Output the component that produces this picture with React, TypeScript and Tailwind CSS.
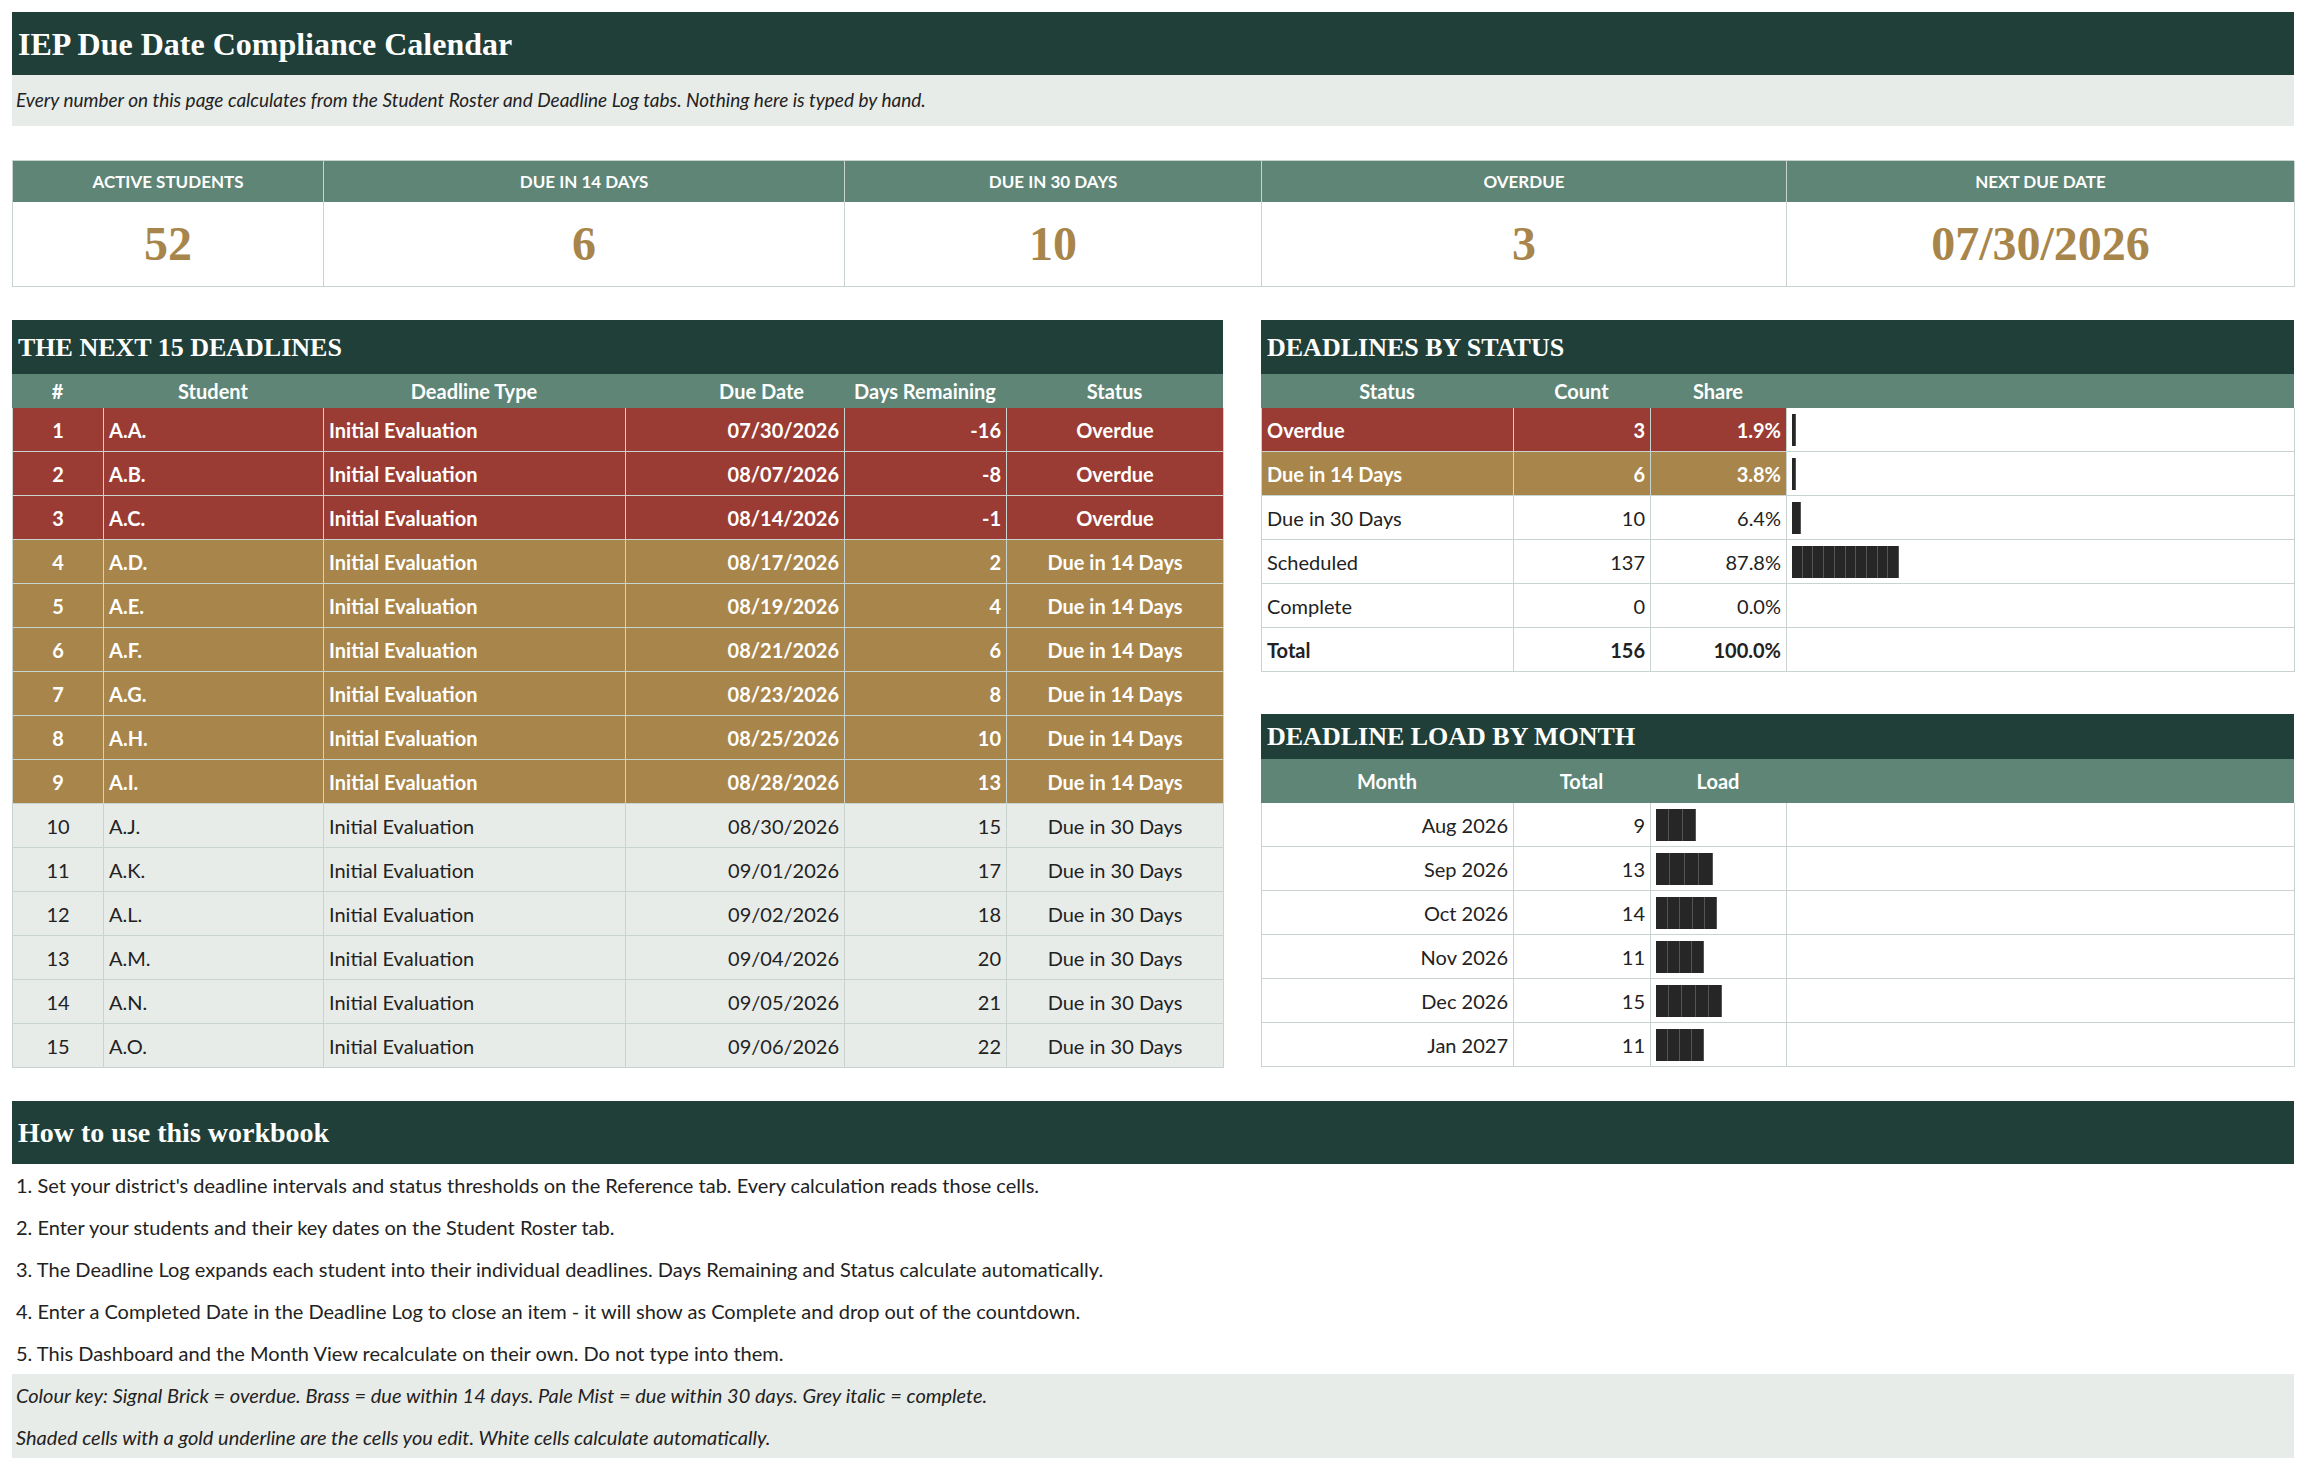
import React from "react";

const SANS = { fontFamily: "Lato, 'Liberation Sans', sans-serif" };
const SERIF = { fontFamily: "'Liberation Serif', 'DejaVu Serif', serif" };

const rows = [
  ["A.A.", "07/30/2026", "-16", "Overdue"],
  ["A.B.", "08/07/2026", "-8", "Overdue"],
  ["A.C.", "08/14/2026", "-1", "Overdue"],
  ["A.D.", "08/17/2026", "2", "Due in 14 Days"],
  ["A.E.", "08/19/2026", "4", "Due in 14 Days"],
  ["A.F.", "08/21/2026", "6", "Due in 14 Days"],
  ["A.G.", "08/23/2026", "8", "Due in 14 Days"],
  ["A.H.", "08/25/2026", "10", "Due in 14 Days"],
  ["A.I.", "08/28/2026", "13", "Due in 14 Days"],
  ["A.J.", "08/30/2026", "15", "Due in 30 Days"],
  ["A.K.", "09/01/2026", "17", "Due in 30 Days"],
  ["A.L.", "09/02/2026", "18", "Due in 30 Days"],
  ["A.M.", "09/04/2026", "20", "Due in 30 Days"],
  ["A.N.", "09/05/2026", "21", "Due in 30 Days"],
  ["A.O.", "09/06/2026", "22", "Due in 30 Days"],
];

function Bar({ w, segs }: { w: number; segs: number }) {
  return (
    <div className="flex h-[32px] bg-[#262626]" style={{ width: w }}>
      {Array.from({ length: segs }).map((_, i) => (
        <div key={i} className="h-full flex-1 border-r border-[#555]" />
      ))}
    </div>
  );
}

function SectionTitle({ children }: { children: React.ReactNode }) {
  return (
    <div className="bg-[#1f3f38] text-white font-bold text-[26px] h-[54px] flex items-center px-[6px]" style={SERIF}>
      {children}
    </div>
  );
}

export default function App() {
  const kpis = [
    ["ACTIVE STUDENTS", "52"],
    ["DUE IN 14 DAYS", "6"],
    ["DUE IN 30 DAYS", "10"],
    ["OVERDUE", "3"],
    ["NEXT DUE DATE", "07/30/2026"],
  ];
  const status = [
    ["Overdue", "3", "1.9%", 4, 1, "brick"],
    ["Due in 14 Days", "6", "3.8%", 4, 1, "brass"],
    ["Due in 30 Days", "10", "6.4%", 9, 1, ""],
    ["Scheduled", "137", "87.8%", 107, 10, ""],
    ["Complete", "0", "0.0%", 0, 0, ""],
  ] as const;
  const months = [
    ["Aug 2026", "9", 40, 3],
    ["Sep 2026", "13", 57, 4],
    ["Oct 2026", "14", 61, 5],
    ["Nov 2026", "11", 48, 4],
    ["Dec 2026", "15", 66, 5],
    ["Jan 2027", "11", 48, 4],
  ] as const;
  const lcols = "grid-cols-[91px_220px_302px_219px_162px_217px]";
  const rcols = "grid-cols-[252px_137px_136px_508px]";
  const cell = "border-r border-b border-[#c9d3cf] flex items-center px-[5px] h-[44px]";

  return (
    <div className="w-[2306px] h-[1467px] bg-white text-[#222] text-[20px] pt-[12px] px-[12px]" style={SANS}>
      <div className="bg-[#1f3f38] text-white font-bold text-[32px] h-[63px] flex items-center px-[6px]" style={SERIF}>
        IEP Due Date Compliance Calendar
      </div>
      <div className="bg-[#e8ece9] h-[51px] flex items-center px-[4px] italic text-[19px]">
        Every number on this page calculates from the Student Roster and Deadline Log tabs. Nothing here is typed by hand.
      </div>

      <div className="mt-[34px] grid grid-cols-[311px_521px_417px_525px_508px] border-l border-t border-[#c9d3cf]">
        {kpis.map(([h, v]) => (
          <div key={h} className="border-r border-b border-[#c9d3cf]">
            <div className="bg-[#5e8576] text-white font-bold text-[17px] h-[41px] flex items-center justify-center">{h}</div>
            <div className="h-[84px] flex items-center justify-center text-[#a8854a] font-bold text-[48px]" style={SERIF}>{v}</div>
          </div>
        ))}
      </div>

      <div className="mt-[33px] flex gap-[38px]">
        <div className="w-[1211px]">
          <SectionTitle>THE NEXT 15 DEADLINES</SectionTitle>
          <div className={`grid ${lcols} bg-[#5e8576] text-white font-bold h-[34px] items-center text-center`}>
            <div>#</div><div>Student</div><div>Deadline Type</div><div className="text-right pr-[40px]">Due Date</div><div>Days Remaining</div><div>Status</div>
          </div>
          {rows.map((r, i) => {
            const bg = r[3] === "Overdue" ? "bg-[#9a3c34] text-white font-bold" : r[3] === "Due in 14 Days" ? "bg-[#a8854a] text-white font-bold" : "bg-[#e8ece9]";
            return (
              <div key={i} className={`grid ${lcols} ${bg} border-l border-[#c9d3cf]`}>
                <div className={`${cell} justify-center`}>{i + 1}</div>
                <div className={cell}>{r[0]}</div>
                <div className={cell}>Initial Evaluation</div>
                <div className={`${cell} justify-end`}>{r[1]}</div>
                <div className={`${cell} justify-end`}>{r[2]}</div>
                <div className={`${cell} justify-center`}>{r[3]}</div>
              </div>
            );
          })}
        </div>

        <div className="w-[1033px]">
          <SectionTitle>DEADLINES BY STATUS</SectionTitle>
          <div className={`grid ${rcols} bg-[#5e8576] text-white font-bold h-[34px] items-center text-center`}>
            <div>Status</div><div>Count</div><div>Share</div><div />
          </div>
          {status.map(([s, c, p, w, n, k]) => {
            const bg = k === "brick" ? "bg-[#9a3c34] text-white font-bold" : k === "brass" ? "bg-[#a8854a] text-white font-bold" : "";
            return (
              <div key={s} className={`grid ${rcols} border-l border-[#c9d3cf]`}>
                <div className={`${cell} ${bg}`}>{s}</div>
                <div className={`${cell} ${bg} justify-end`}>{c}</div>
                <div className={`${cell} ${bg} justify-end`}>{p}</div>
                <div className={cell}>{w > 0 && <Bar w={w} segs={n} />}</div>
              </div>
            );
          })}
          <div className={`grid ${rcols} border-l border-[#c9d3cf] font-bold`}>
            <div className={cell}>Total</div>
            <div className={`${cell} justify-end`}>156</div>
            <div className={`${cell} justify-end`}>100.0%</div>
            <div className={cell} />
          </div>

          <div className="mt-[42px]">
            <div className="bg-[#1f3f38] text-white font-bold text-[26px] h-[45px] flex items-center px-[6px]" style={SERIF}>DEADLINE LOAD BY MONTH</div>
            <div className={`grid ${rcols} bg-[#5e8576] text-white font-bold h-[44px] items-center text-center`}>
              <div>Month</div><div>Total</div><div>Load</div><div />
            </div>
            {months.map(([m, t, w, n]) => (
              <div key={m} className={`grid ${rcols} border-l border-[#c9d3cf]`}>
                <div className={`${cell} justify-end`}>{m}</div>
                <div className={`${cell} justify-end`}>{t}</div>
                <div className={cell}><Bar w={w} segs={n} /></div>
                <div className={cell} />
              </div>
            ))}
          </div>
        </div>
      </div>

      <div className="mt-[33px] bg-[#1f3f38] text-white font-bold text-[28px] h-[63px] flex items-center px-[6px]" style={SERIF}>
        How to use this workbook
      </div>
      <div className="px-[4px]">
        {[
          "1. Set your district's deadline intervals and status thresholds on the Reference tab. Every calculation reads those cells.",
          "2. Enter your students and their key dates on the Student Roster tab.",
          "3. The Deadline Log expands each student into their individual deadlines. Days Remaining and Status calculate automatically.",
          "4. Enter a Completed Date in the Deadline Log to close an item - it will show as Complete and drop out of the countdown.",
          "5. This Dashboard and the Month View recalculate on their own. Do not type into them.",
        ].map((t) => (
          <div key={t} className="h-[42px] flex items-center">{t}</div>
        ))}
      </div>
      <div className="bg-[#e8ece9] italic px-[4px]">
        <div className="h-[42px] flex items-center">Colour key: Signal Brick = overdue. Brass = due within 14 days. Pale Mist = due within 30 days. Grey italic = complete.</div>
        <div className="h-[42px] flex items-center">Shaded cells with a gold underline are the cells you edit. White cells calculate automatically.</div>
      </div>
    </div>
  );
}
